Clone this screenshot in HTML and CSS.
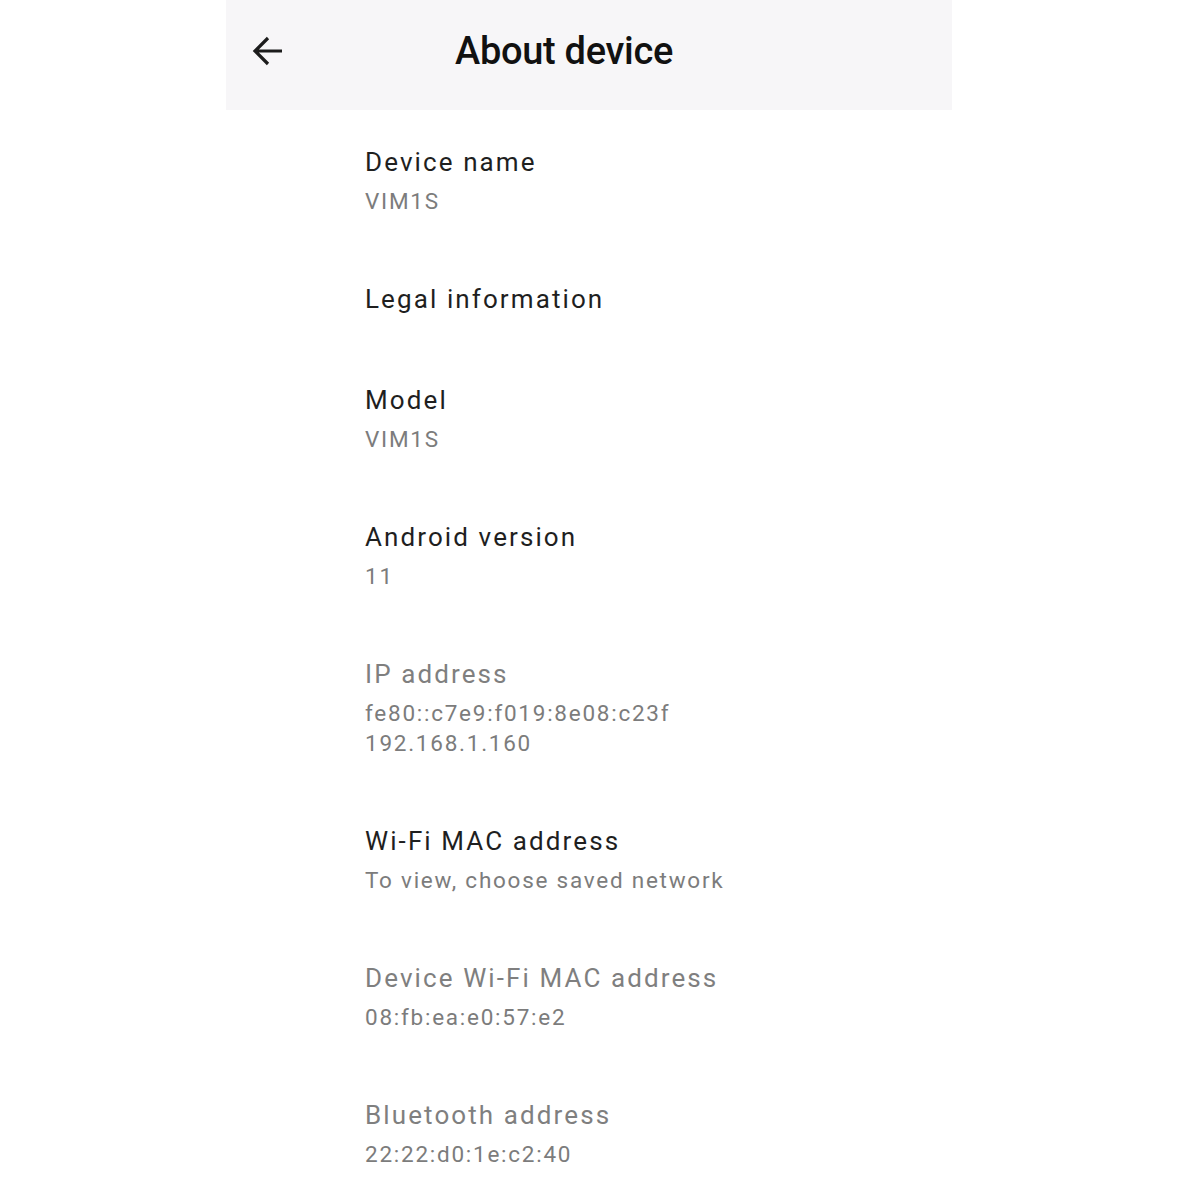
FILE: index.html
```html
<!DOCTYPE html>
<html>
<head>
<meta charset="utf-8">
<link rel="stylesheet" href="styles.css">
</head>
<body>
<div class="screen">
  <header class="appbar">
    <span class="back">
      <svg width="32" height="32" viewBox="0 0 32 32"><path d="M30 16H4M16 3L3 16l13 13" fill="none" stroke="#1c1c1c" stroke-width="3.2" stroke-linecap="butt" stroke-linejoin="miter"/></svg>
    </span>
    <h1 class="title">About device</h1>
  </header>
  <main class="list">
    <div class="row">
      <div class="row-title">Device name</div>
      <div class="row-sub">VIM1S</div>
    </div>
    <div class="row">
      <div class="row-title">Legal information</div>
    </div>
    <div class="row">
      <div class="row-title">Model</div>
      <div class="row-sub">VIM1S</div>
    </div>
    <div class="row">
      <div class="row-title">Android version</div>
      <div class="row-sub">11</div>
    </div>
    <div class="row disabled">
      <div class="row-title">IP address</div>
      <div class="row-sub">fe80::c7e9:f019:8e08:c23f</div>
      <div class="row-sub">192.168.1.160</div>
    </div>
    <div class="row">
      <div class="row-title">Wi-Fi MAC address</div>
      <div class="row-sub">To view, choose saved network</div>
    </div>
    <div class="row disabled">
      <div class="row-title">Device Wi-Fi MAC address</div>
      <div class="row-sub">08:fb:ea:e0:57:e2</div>
    </div>
    <div class="row disabled">
      <div class="row-title">Bluetooth address</div>
      <div class="row-sub">22:22:d0:1e:c2:40</div>
    </div>
  </main>
</div>
</body>
</html>
```

FILE: styles.css
```css
html, body {
  margin: 0;
  padding: 0;
  background: #ffffff;
}
body {
  font-family: Roboto, "Noto Sans", "Liberation Sans", sans-serif;
  color: #1f1f1f;
}
.screen {
  width: 726px;
  margin: 0 auto;
}
.appbar {
  height: 110px;
  background: #f7f6f8;
  display: flex;
  align-items: center;
  padding-bottom: 8px;
  box-sizing: border-box;
}
.back {
  width: 32px;
  height: 32px;
  margin-left: 26px;
  display: flex;
}
.title {
  margin: 0 0 0 171px;
  font-size: 38px;
  font-weight: 500;
  color: #111;
  line-height: 40px;
  letter-spacing: -0.3px;
}
.list {
  display: flex;
  flex-direction: column;
}
.row {
  padding: 34px 0 31px 139px;
  display: flex;
  flex-direction: column;
}
.row-title {
  font-size: 26px;
  line-height: 36px;
  color: #1f1f1f;
  letter-spacing: 2.1px;
}
.row-sub {
  font-size: 22.5px;
  line-height: 30px;
  color: #7c7c7c;
  letter-spacing: 1.75px;
}
.row-title + .row-sub {
  margin-top: 6px;
}
.disabled .row-title {
  color: #7f7f7f;
}
```
